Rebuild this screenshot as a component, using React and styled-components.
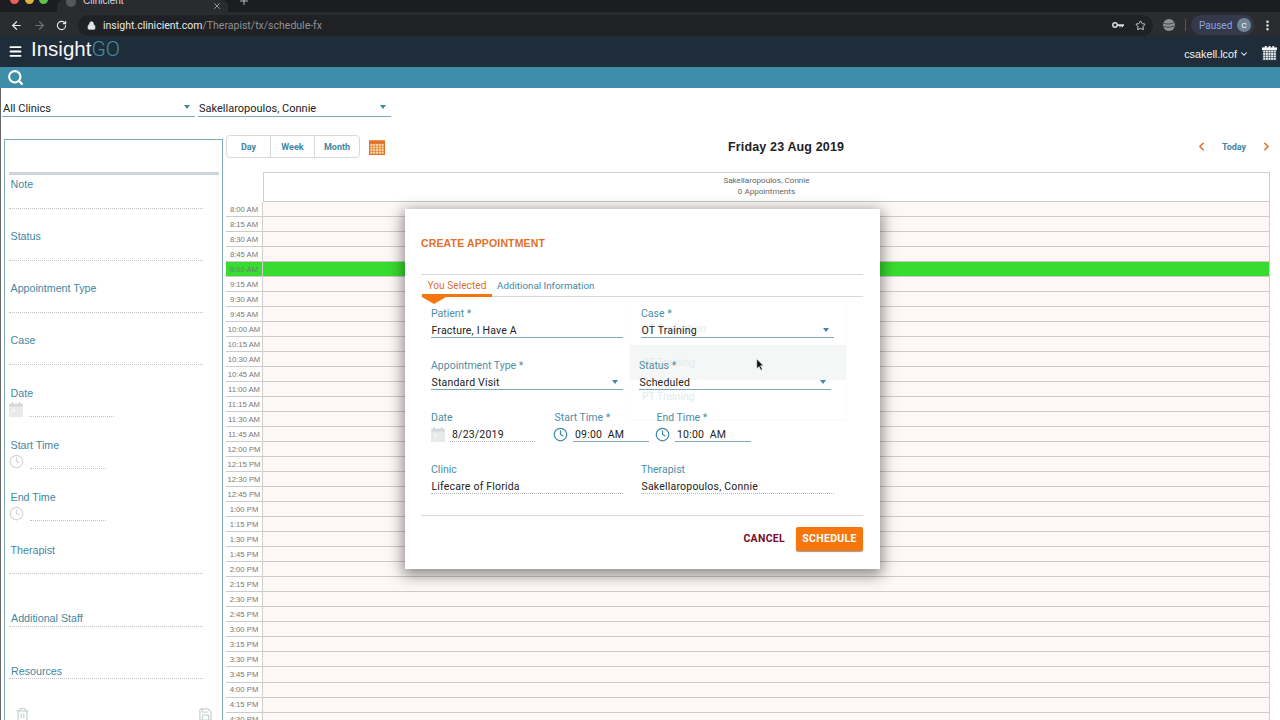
import React from 'react'
import styled, { createGlobalStyle } from 'styled-components'
import { ArrowLeft, ArrowRight, RotateCw, Lock, Star, Search, Menu, ChevronDown, ChevronLeft, ChevronRight, Clock, Trash2, Save, X, Plus, MoreVertical } from 'lucide-react'

const Global = createGlobalStyle`
html, body { margin: 0; padding: 0; background: #fff; }
body { font-family: Roboto, "Liberation Sans", sans-serif; overflow: hidden; }
* { box-sizing: border-box; }
`

let times = []
for (let h = 8; h <= 16; h++) {
    for (let m = 0; m < 60; m += 15) {
        let hour = h > 12 ? h - 12 : h
        times.push(`${hour}:${m === 0 ? `00` : m} ${h >= 12 ? `PM` : `AM`}`)
    }
}
times = times.slice(0, 35)

let side_fields = [
    { label: `Note`, height: 52, gap: 18 },
    { label: `Status`, height: 52, gap: 18 },
    { label: `Appointment Type`, height: 52, gap: 18 },
    { label: `Case`, height: 53, gap: 18 },
    { label: `Date`, height: 52, icon: `date`, width: 85 },
    { label: `Start Time`, height: 52, icon: `clock`, width: 76 },
    { label: `End Time`, height: 53, icon: `clock`, width: 76 },
    { label: `Therapist`, height: 68, gap: 17 },
    { label: `Additional Staff`, height: 53, gap: 2, inset: true },
    { label: `Resources`, height: 52, gap: 1, inset: true },
]

const DateIcon = ({ color = `#d4d8da`, size = 14 }) => (
    <svg width={size} height={size + 1} viewBox="0 0 14 15">
        <rect x="0.5" y="2" width="13" height="12.5" fill={color} opacity="0.55" stroke={color} />
        <rect x="0.5" y="2" width="13" height="2.5" fill={color} />
        <rect x="2.5" y="0" width="1.5" height="3" fill={color} />
        <rect x="10" y="0" width="1.5" height="3" fill={color} />
        <rect x="3" y="7" width="3" height="3" fill="#f4f6f6" />
    </svg>
)

const GridCalendar = ({ line, fill, head, rings, size }) => {
    let cells = []
    for (let x = 0; x < 5; x++) {
        for (let y = 0; y < 4; y++) {
            cells.push(<rect key={`${x}${y}`} x={1.3 + x * 2.8} y={4.9 + y * 2.6} width="2.2" height="2" fill={fill} />)
        }
    }
    return (
        <svg width={size} height={size} viewBox="0 0 16 16">
            <rect x="0" y="1.5" width="16" height="14.5" fill={line} />
            <rect x="0" y="1.5" width="16" height="2.9" fill={head} />
            {rings && <rect x="3" y="0" width="2" height="3" fill={head} />}
            {rings && <rect x="7" y="0" width="2" height="3" fill={head} />}
            {rings && <rect x="11" y="0" width="2" height="3" fill={head} />}
            {cells}
        </svg>
    )
}

const KeyIcon = () => (
    <svg width="12" height="8" viewBox="0 0 12 8">
        <circle cx="3" cy="4" r="2.2" fill="none" stroke="#d8d9db" strokeWidth="1.5" />
        <path d="M5 3.2 H12 V5 H11 V6.2 H9.6 V5 H8.6 V6.2 H7.4 V5 H5 Z" fill="#d8d9db" />
    </svg>
)

const ExtensionIcon = () => (
    <ExtensionSvg width="12" height="12" viewBox="0 0 12 12">
        <circle cx="6" cy="6" r="6" fill="#8f9193" />
        <path d="M0.5 4.2 C3 5.6 8 5.2 11.6 3.4 M0.3 7.4 C4 8.8 8 8.2 11.7 7" fill="none" stroke="#3a3c3f" strokeWidth="0.9" />
    </ExtensionSvg>
)

const main = () => {
    return (
        <Page>
            <Global />
            <TabStrip>
                <Lights>
                    <Light color="#ec5f57" />
                    <Light color="#e0b13c" />
                    <Light color="#5fc04c" />
                </Lights>
                <ActiveTab>
                    <TabFavicon />
                    <TabTitle>Clinicient</TabTitle>
                    <X size={10} color="#aeb0b3" />
                </ActiveTab>
                <TabPlus><Plus size={12} color="#b8babd" /></TabPlus>
            </TabStrip>
            <BrowserBar>
                <ArrowLeft size={13} color="#e6e7e8" strokeWidth={2.2} />
                <ArrowRight size={13} color="#6d6f72" strokeWidth={2.2} />
                <RotateCw size={11} color="#e6e7e8" strokeWidth={2.4} />
                <UrlPill>
                    <Lock size={9} color="#e6e7e8" fill="#e6e7e8" />
                    <UrlText>insight.clinicient.com<UrlPath>/Therapist/tx/schedule-fx</UrlPath></UrlText>
                    <UrlSpacer />
                    <KeyIcon />
                    <Star size={11} color="#d8d9db" />
                </UrlPill>
                <ExtensionIcon />
                <BarDivider />
                <PausedPill>
                    <PausedText>Paused</PausedText>
                    <Avatar>C</Avatar>
                </PausedPill>
                <BarMenu><MoreVertical size={13} color="#e6e7e8" strokeWidth={2.6} /></BarMenu>
            </BrowserBar>
            <NavBar>
                <Menu size={15} color="#fff" strokeWidth={3} />
                <Logo>Insight<LogoAccent>GO</LogoAccent></Logo>
                <NavSpacer />
                <UserName>csakell.lcof</UserName>
                <UserChevron size={10} color="#fff" strokeWidth={2.5} />
                <NavCalendar><GridCalendar line="#2a3a48" fill="#eef1f2" head="#f4f6f7" rings size={15} /></NavCalendar>
            </NavBar>
            <SearchBar>
                <Search size={17} color="#fff" strokeWidth={3} />
            </SearchBar>
            <Filters>
                <FilterSelect>All Clinics<SelectArrow /></FilterSelect>
                <FilterSelect>Sakellaropoulos, Connie<SelectArrow /></FilterSelect>
            </Filters>
            <Workspace>
                <SidePanel>
                    <SideRule />
                    {
                        side_fields.map((item, index) => {
                            return (
                                <SideField key={index} height={item.height}>
                                    <SideLabel inset={item.inset}>{item.label}</SideLabel>
                                    {
                                        item.icon
                                            ? <SideIconRow>
                                                {item.icon === `date` ? <DateIcon /> : <Clock size={15} color="#d2d6d8" />}
                                                <SideDots width={item.width} />
                                            </SideIconRow>
                                            : <SideDots gap={item.gap} />
                                    }
                                </SideField>
                            )
                        })
                    }
                    <SideActions>
                        <Trash2 size={15} color="#c9d2d5" />
                        <Save size={15} color="#c9d2d5" />
                    </SideActions>
                </SidePanel>
                <Schedule>
                    <ScheduleTop>
                        <ViewButtons>
                            <ViewButton>Day</ViewButton>
                            <ViewButton>Week</ViewButton>
                            <ViewButton>Month</ViewButton>
                        </ViewButtons>
                        <CalendarPick><GridCalendar line="#e2702a" fill="#f7d9a6" head="#e2702a" size={16} /></CalendarPick>
                        <DayTitle>Friday 23 Aug 2019</DayTitle>
                        <DayNav>
                            <ChevronLeft size={13} color="#e2702a" strokeWidth={3} />
                            <TodayLink>Today</TodayLink>
                            <ChevronRight size={13} color="#e2702a" strokeWidth={3} />
                        </DayNav>
                    </ScheduleTop>
                    <GridHead>
                        <HeadSpacer />
                        <HeadCell>
                            <span>Sakellaropoulos, Connie</span>
                            <span>0 Appointments</span>
                        </HeadCell>
                    </GridHead>
                    {
                        times.map((time, index) => {
                            return (
                                <TimeRow key={index}>
                                    <TimeCell active={time === `9:00 AM`}>{time}</TimeCell>
                                    <SlotCell active={time === `9:00 AM`} />
                                </TimeRow>
                            )
                        })
                    }
                </Schedule>
            </Workspace>
            <Modal>
                <ModalTitle>CREATE APPOINTMENT</ModalTitle>
                <Tabs>
                    <TabItem selected>You Selected</TabItem>
                    <TabItem>Additional Information</TabItem>
                </Tabs>
                <FormArea>
                    <GhostMenu>
                        <GhostItem>OT Evaluation</GhostItem>
                        <GhostItem hovered>OT Training</GhostItem>
                        <GhostItem>PT Training</GhostItem>
                    </GhostMenu>
                    <FormRow>
                        <FormField width={192}>
                            <FieldLabel>Patient *</FieldLabel>
                            <FieldValue>Fracture, I Have A</FieldValue>
                        </FormField>
                        <FormField width={193} left={18}>
                            <FieldLabel>Case *</FieldLabel>
                            <FieldValue>OT Training<FieldArrow /></FieldValue>
                        </FormField>
                    </FormRow>
                    <FormRow>
                        <FormField width={192}>
                            <FieldLabel>Appointment Type *</FieldLabel>
                            <FieldValue>Standard Visit<FieldArrow /></FieldValue>
                        </FormField>
                        <FormField width={192} left={16}>
                            <FieldLabel>Status *</FieldLabel>
                            <FieldValue>Scheduled<FieldArrow /></FieldValue>
                        </FormField>
                    </FormRow>
                    <FormRow>
                        <FormField width={104}>
                            <FieldLabel>Date</FieldLabel>
                            <IconValue>
                                <DateIcon />
                                <FieldValue dotted grow>8/23/2019</FieldValue>
                            </IconValue>
                        </FormField>
                        <FormField width={96} left={18}>
                            <FieldLabel inset>Start Time *</FieldLabel>
                            <IconValue>
                                <Clock size={15} color="#3f88a3" />
                                <FieldValue grow>09:00{`\u00a0 `}AM</FieldValue>
                            </IconValue>
                        </FormField>
                        <FormField width={96} left={6}>
                            <FieldLabel inset>End Time *</FieldLabel>
                            <IconValue>
                                <Clock size={15} color="#3f88a3" />
                                <FieldValue grow>10:00{`\u00a0 `}AM</FieldValue>
                            </IconValue>
                        </FormField>
                    </FormRow>
                    <FormRow>
                        <FormField width={192}>
                            <FieldLabel>Clinic</FieldLabel>
                            <FieldValue dotted>Lifecare of Florida</FieldValue>
                        </FormField>
                        <FormField width={193} left={18}>
                            <FieldLabel>Therapist</FieldLabel>
                            <FieldValue dotted>Sakellaropoulos, Connie</FieldValue>
                        </FormField>
                    </FormRow>
                </FormArea>
                <ModalFooter>
                    <CancelButton>CANCEL</CancelButton>
                    <ScheduleButton>SCHEDULE</ScheduleButton>
                </ModalFooter>
                <Pointer viewBox="0 0 12 18" width="9" height="14">
                    <path d="M1 1 L1 14 L4 11 L6.5 16 L8.5 15 L6 10 L10 10 Z" fill="#111" stroke="#fff" strokeWidth="0.7" />
                </Pointer>
            </Modal>
        </Page>
    )
}

const Page = styled.div`
position: relative;
width: 1280px;
height: 720px;
overflow: hidden;
background: #fff;
`

const TabStrip = styled.div`
display: flex;
height: 12px;
background: #1c1d20;
overflow: hidden;
`

const Lights = styled.div`
display: flex;
gap: 5.5px;
width: 57px;
padding-left: 10px;
margin-top: -5px;
`

const Light = styled.div`
width: 9px;
height: 9px;
border-radius: 50%;
background: ${props => props.color};
`

const ActiveTab = styled.div`
display: flex;
align-items: center;
width: 171px;
height: 12px;
padding: 0 6px 0 10px;
background: #292b2e;
border-top-left-radius: 6px;
border-top-right-radius: 6px;
`

const TabFavicon = styled.div`
width: 10px;
height: 10px;
margin: -9px 0 0 -1px;
border-radius: 50%;
background: #55585b;
`

const TabTitle = styled.div`
flex: 1;
margin: -11px 0 0 7px;
font: 10px "Liberation Sans", sans-serif;
color: #d6d7d9;
`

const TabPlus = styled.div`
display: flex;
margin: -5px 0 0 10px;
`

const BrowserBar = styled.div`
display: flex;
align-items: center;
height: 24px;
padding: 2px 6px 0 10px;
gap: 10px;
background: #2a2c2f;
`

const UrlPill = styled.div`
display: flex;
align-items: center;
width: 1075px;
height: 21px;
margin-left: 1px;
padding: 0 7px 0 9px;
gap: 11px;
border-radius: 11px;
background: #1f2124;
`

const UrlText = styled.div`
margin-left: -4px;
font: 10.5px Roboto, sans-serif;
color: #e8e9ea;
`

const UrlPath = styled.span`
color: #8f9194;
`

const UrlSpacer = styled.div`
flex: 1;
`

const ExtensionSvg = styled.svg`
flex: none;
`

const BarDivider = styled.div`
width: 1px;
height: 12px;
background: #55575a;
`

const PausedPill = styled.div`
display: flex;
align-items: center;
justify-content: space-between;
width: 63px;
height: 20px;
margin-left: -5px;
padding: 0 3px 0 8px;
border-radius: 10px;
background: #343a4c;
`

const PausedText = styled.div`
font: 10px Roboto, sans-serif;
color: #8ba5e0;
`

const Avatar = styled.div`
display: flex;
align-items: center;
justify-content: center;
width: 14px;
height: 14px;
border-radius: 50%;
background: #6f8494;
font: 8px Roboto, sans-serif;
color: #fff;
`

const BarMenu = styled.div`
display: flex;
margin-left: -3px;
`

const NavBar = styled.div`
display: flex;
align-items: center;
height: 31px;
padding: 0 3px 0 8px;
background: #1f2d3a;
`

const Logo = styled.div`
margin: -5px 0 0 8px;
font: 20.5px "Liberation Sans", sans-serif;
color: #f4f6f7;
`

const LogoAccent = styled.span`
font: 300 21px Roboto, sans-serif;
color: #3f8ea9;
`

const NavSpacer = styled.div`
flex: 1;
`

const UserName = styled.div`
margin: 5px 2px 0 0;
font: 10.8px "Liberation Sans", sans-serif;
color: #f0f2f3;
`

const UserChevron = styled(ChevronDown)`
margin-top: 5px;
`

const NavCalendar = styled.div`
display: flex;
margin: 3px 0 0 13px;
width: 15px;
`

const SearchBar = styled.div`
display: flex;
align-items: center;
height: 21px;
padding-left: 7px;
background: #3e8ea9;
`

const Filters = styled.div`
display: flex;
gap: 3px;
height: 51px;
padding: 12px 0 0 1px;
border-left: 1px solid #666;
`

const FilterSelect = styled.div`
position: relative;
width: 193px;
height: 17px;
padding: 2px 0 0 1px;
border-bottom: 1px solid #7ea9b9;
font: 11px Roboto, sans-serif;
color: #222;
`

const SelectArrow = styled.div`
position: absolute;
right: 5px;
top: 5px;
border-left: 3.5px solid transparent;
border-right: 3.5px solid transparent;
border-top: 4px solid #3f88a3;
`

const Workspace = styled.div`
display: flex;
height: 581px;
border-left: 1px solid #666;
`

const SidePanel = styled.div`
display: flex;
flex-direction: column;
width: 219px;
height: 620px;
margin-left: 3px;
padding: 32px 3px 0 4px;
border: 1px solid #7ea9b9;
border-bottom: none;
`

const SideRule = styled.div`
height: 3px;
background: #cbd5dc;
`

const SideField = styled.div`
display: flex;
flex-direction: column;
height: ${props => props.height}px;
padding-top: 3px;
`

const SideLabel = styled.div`
padding-left: ${props => props.inset ? 2 : 1.5}px;
font: 10.7px "Liberation Sans", sans-serif;
color: #3f88a3;
`

const SideIconRow = styled.div`
display: flex;
align-items: flex-end;
gap: 6px;
margin-top: 3px;
`

const SideDots = styled.div`
width: ${props => props.width ? `${props.width}px` : `194px`};
margin-top: ${props => props.gap || 0}px;
border-bottom: 1px dotted #c0c4c6;
`

const SideActions = styled.div`
display: flex;
justify-content: space-between;
margin-top: -7px;
padding: 0 6px 0 6px;
`

const Schedule = styled.div`
display: flex;
flex-direction: column;
width: 1044px;
margin-left: 3px;
`

const ScheduleTop = styled.div`
position: relative;
display: flex;
flex: none;
align-items: center;
height: 25px;
margin-top: -5px;
`

const ViewButtons = styled.div`
display: flex;
height: 23px;
border: 1px solid #d5dadc;
border-radius: 4px;
`

const ViewButton = styled.div`
display: flex;
align-items: center;
justify-content: center;
width: 44px;
border-right: 1px solid #d5dadc;
font: bold 9px Roboto, sans-serif;
color: #3f88a3;
&:last-child {
    border-right: none;
}
`

const CalendarPick = styled.div`
display: flex;
margin-left: 9px;
`

const DayTitle = styled.div`
flex: 1 1 0;
padding-left: 343px;
font: bold 12.5px "Liberation Sans", sans-serif;
letter-spacing: 0.15px;
color: #222;
`

const DayNav = styled.div`
display: flex;
align-items: center;
justify-content: space-between;
width: 78px;
margin-right: -3px;
`

const TodayLink = styled.div`
font: bold 9px Roboto, sans-serif;
color: #3f88a3;
`

const GridHead = styled.div`
display: flex;
flex: none;
height: 30px;
margin-top: 13px;
`

const HeadSpacer = styled.div`
width: 37px;
`

const HeadCell = styled.div`
display: flex;
flex-direction: column;
align-items: center;
justify-content: center;
width: 1008px;
gap: 1px;
padding-bottom: 4px;
border: 1px solid #cfcfcf;
border-bottom: 1px solid #c8c8c8;
font: 8.1px Roboto, sans-serif;
color: #666;
`

const TimeRow = styled.div`
display: flex;
flex: none;
height: 15.03px;
`

const TimeCell = styled.div`
display: flex;
align-items: center;
justify-content: center;
width: 37px;
border-bottom: 1px solid #cdcaca;
border-right: 1px solid #cfcfcf;
font: 7.7px "Liberation Sans", sans-serif;
white-space: nowrap;
color: #777;
background: ${props => props.active ? `#38dc30` : `#fff`};
`

const SlotCell = styled.div`
width: 1008px;
border-bottom: 1px solid #cdcaca;
border-right: 1px solid #cfcfcf;
background: ${props => props.active ? `#38dc30` : `#fdf7f6`};
`

const Modal = styled.div`
position: absolute;
left: 405px;
top: 209px;
display: flex;
flex-direction: column;
width: 475px;
height: 360px;
padding: 28px 17px 0 16px;
background: #fff;
box-shadow: 0 4px 14px 2px rgba(0, 0, 0, 0.45);
`

const ModalTitle = styled.div`
flex: none;
height: 37px;
font: bold 10.5px "Liberation Sans", sans-serif;
letter-spacing: 0.15px;
color: #e2702a;
`

const Tabs = styled.div`
display: flex;
flex: none;
height: 23px;
padding-left: 1px;
border-top: 1px solid #d5d9dc;
border-bottom: 1px solid #d5d9dc;
`

const TabItem = styled.div`
position: relative;
width: ${props => props.selected ? `70px` : `auto`};
margin-left: ${props => props.selected ? 0 : 5}px;
padding: 5px 0 0 ${props => props.selected ? 5.5 : 0}px;
font: ${props => props.selected ? 10.2 : 9.8}px Roboto, sans-serif;
color: ${props => props.selected ? `#e2702a` : `#3f88a3`};
${props => props.selected && `
    border-bottom: 3px solid #f5760c;
    height: 22px;
    &::after {
        content: "";
        position: absolute;
        left: 0;
        top: 22px;
        border-left: 12px solid transparent;
        border-right: 12px solid transparent;
        border-top: 7px solid #f5760c;
    }
`}
`

const FormArea = styled.div`
position: relative;
display: flex;
flex-direction: column;
padding: 9px 0 0 10px;
`

const GhostMenu = styled.div`
position: absolute;
left: 209px;
top: 0;
display: flex;
flex-direction: column;
width: 216px;
height: 122px;
padding-top: 14px;
box-shadow: 0 1px 3px rgba(0, 0, 0, 0.04);
`

const GhostItem = styled.div`
display: flex;
flex: none;
align-items: center;
height: 34.3px;
padding-left: 12px;
font: 10.5px Roboto, sans-serif;
color: #e6eaec;
background: ${props => props.hovered ? `#f5f7f7` : `transparent`};
`

const FormRow = styled.div`
position: relative;
display: flex;
height: 52px;
`

const FormField = styled.div`
width: ${props => props.width}px;
margin-left: ${props => props.left || 0}px;
`

const FieldLabel = styled.div`
height: 15px;
padding-top: 1px;
padding-left: ${props => props.inset ? 1.5 : 0}px;
font: 10.5px Roboto, sans-serif;
color: #4d8ea6;
`

const FieldValue = styled.div`
position: relative;
flex: ${props => props.grow ? 1 : `none`};
height: 17px;
padding-top: 3px;
border-bottom: 1px ${props => props.dotted ? `dotted #b4b8ba` : `solid #7ea9b9`};
font: 10.5px Roboto, sans-serif;
letter-spacing: 0.2px;
white-space: nowrap;
color: #222;
margin-left: ${props => props.grow ? 5 : 0}px;
padding-left: ${props => props.grow ? 2 : 0.5}px;
`

const FieldArrow = styled.div`
position: absolute;
right: 5px;
top: 7px;
border-left: 3.5px solid transparent;
border-right: 3.5px solid transparent;
border-top: 4px solid #3f88a3;
`

const IconValue = styled.div`
display: flex;
align-items: flex-end;
`

const ModalFooter = styled.div`
display: flex;
flex: none;
align-items: center;
justify-content: flex-end;
gap: 11px;
height: 46px;
margin-top: 1px;
border-top: 1px solid #d5d9e4;
`

const CancelButton = styled.div`
font: bold 10.5px Roboto, sans-serif;
letter-spacing: 0.3px;
color: #7c0a2a;
`

const ScheduleButton = styled.div`
display: flex;
align-items: center;
justify-content: center;
width: 67px;
height: 24px;
border-radius: 2px;
background: #f5760c;
box-shadow: 0 1px 1px rgba(0, 0, 0, 0.4);
font: bold 10.5px Roboto, sans-serif;
letter-spacing: 0.3px;
color: #fff;
`

const Pointer = styled.svg`
position: absolute;
left: 351px;
top: 149px;
`

export default main
